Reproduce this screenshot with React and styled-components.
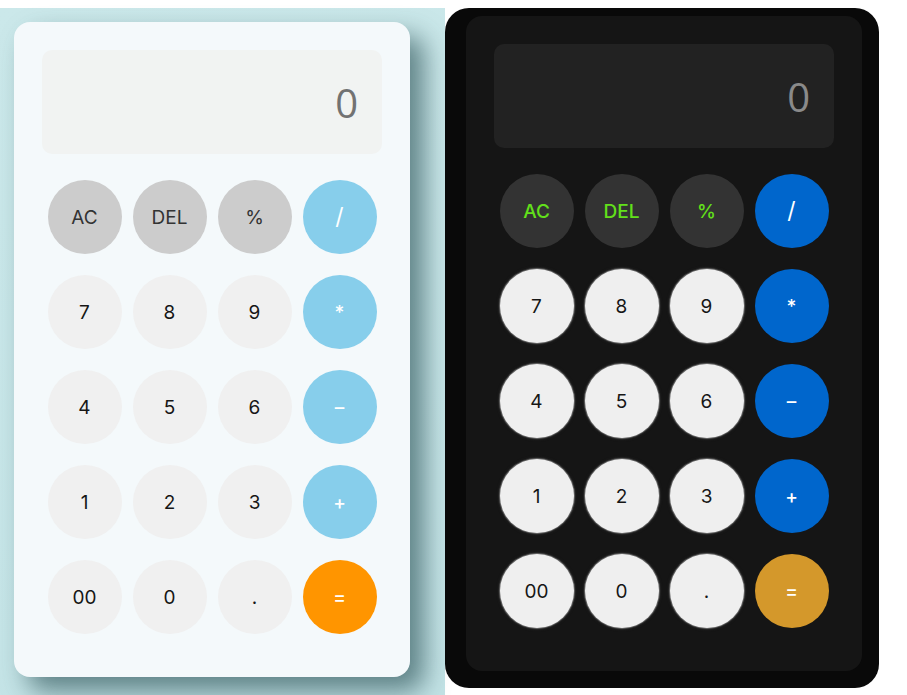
import React from 'react'
import styled, { createGlobalStyle, css } from 'styled-components'

const themes = {
  light: {
    card: '#f4f9fb',
    screen: '#f1f3f2',
    screenText: '#727272',
    num: '#f0f0f0',
    numText: '#161616',
    numRing: 'none',
    fn: '#cccccc',
    fnText: '#333333',
    fnWeight: 400,
    op: '#87ceeb',
    eq: '#ff9500',
  },
  dark: {
    card: '#151515',
    screen: '#222222',
    screenText: '#8a8a8a',
    num: '#efefef',
    numText: '#161616',
    numRing: '0 0 1px 1px #6a6a6a, 0 0 3px 1px #2c2c2c',
    fn: '#333333',
    fnText: '#62e01a',
    fnWeight: 500,
    op: '#0066cc',
    eq: '#d4982b',
  },
}

const GlobalStyle = createGlobalStyle`
  body {
    margin: 0;
    background: #ffffff;
    font-family: Inter, "Liberation Sans", sans-serif;
  }
`

const Page = styled.div`
  display: flex;
  align-items: flex-start;
  padding-top: 8px;
`

const LightStage = styled.div`
  width: 445px;
  height: 687px;
  box-sizing: border-box;
  padding: 14px 0 0 14px;
  background: linear-gradient(160deg, #cbe8ea 0%, #c3e3e6 100%);
`

const DarkStage = styled.div`
  width: 434px;
  height: 680px;
  box-sizing: border-box;
  padding: 8px 16px 18px 21px;
  background: #090909;
  border-radius: 24px;
`

const Card = styled.div`
  width: 396px;
  height: 655px;
  box-sizing: border-box;
  padding: 28px 28px 0;
  border-radius: 16px;
  background: ${p => p.$t.card};
  display: flex;
  flex-direction: column;
  gap: 26px;
  ${p => p.$shadow && css`
    box-shadow: 14px 14px 26px rgba(30, 70, 75, 0.62);
  `}
`

const Screen = styled.div`
  height: 104px;
  border-radius: 10px;
  background: ${p => p.$t.screen};
  color: ${p => p.$t.screenText};
  display: flex;
  align-items: center;
  justify-content: flex-end;
  padding: 0 24px;
  font-family: "Open Sans", "Liberation Sans", sans-serif;
  font-size: 40px;
  font-weight: 400;
`

const Keys = styled.div`
  display: grid;
  grid-template-columns: repeat(4, 85px);
  grid-auto-rows: 74px;
  row-gap: 21px;
  justify-items: center;
`

const kinds = {
  num: t => css`
    background: ${t.num};
    color: ${t.numText};
    box-shadow: ${t.numRing};
    font-size: 19px;
  `,
  fn: t => css`
    background: ${t.fn};
    color: ${t.fnText};
    font-weight: ${t.fnWeight};
    font-size: 19px;
  `,
  op: t => css`
    background: ${t.op};
    color: #ffffff;
    font-weight: 500;
    font-size: 19px;
  `,
  eq: t => css`
    background: ${t.eq};
    color: #ffffff;
    font-weight: 500;
    font-size: 19px;
  `,
}

const Key = styled.button`
  width: 74px;
  height: 74px;
  border: none;
  border-radius: 50%;
  padding: 0;
  display: flex;
  align-items: center;
  justify-content: center;
  font-family: Inter, "Liberation Sans", sans-serif;
  font-weight: 400;
  ${p => kinds[p.$kind](p.$t)}
  ${p => p.$big && css`font-size: 23px; font-weight: 400;`}
`

const layout = [
  ['AC', 'fn'], ['DEL', 'fn'], ['%', 'fn'], ['/', 'op'],
  ['7', 'num'], ['8', 'num'], ['9', 'num'], ['*', 'op'],
  ['4', 'num'], ['5', 'num'], ['6', 'num'], ['–', 'op'],
  ['1', 'num'], ['2', 'num'], ['3', 'num'], ['+', 'op'],
  ['00', 'num'], ['0', 'num'], ['.', 'num'], ['=', 'eq'],
]

const Calculator = ({ mode, shadow }) => {
  const t = themes[mode]
  return (
    <Card $t={t} $shadow={shadow}>
      <Screen $t={t}>0</Screen>
      <Keys>
        {layout.map(([label, kind]) => (
          <Key key={label} $t={t} $kind={kind} $big={label === '/'}>
            {label}
          </Key>
        ))}
      </Keys>
    </Card>
  )
}

export default function App() {
  return (
    <>
      <GlobalStyle />
      <Page>
        <LightStage>
          <Calculator mode="light" shadow />
        </LightStage>
        <DarkStage>
          <Calculator mode="dark" />
        </DarkStage>
      </Page>
    </>
  )
}
